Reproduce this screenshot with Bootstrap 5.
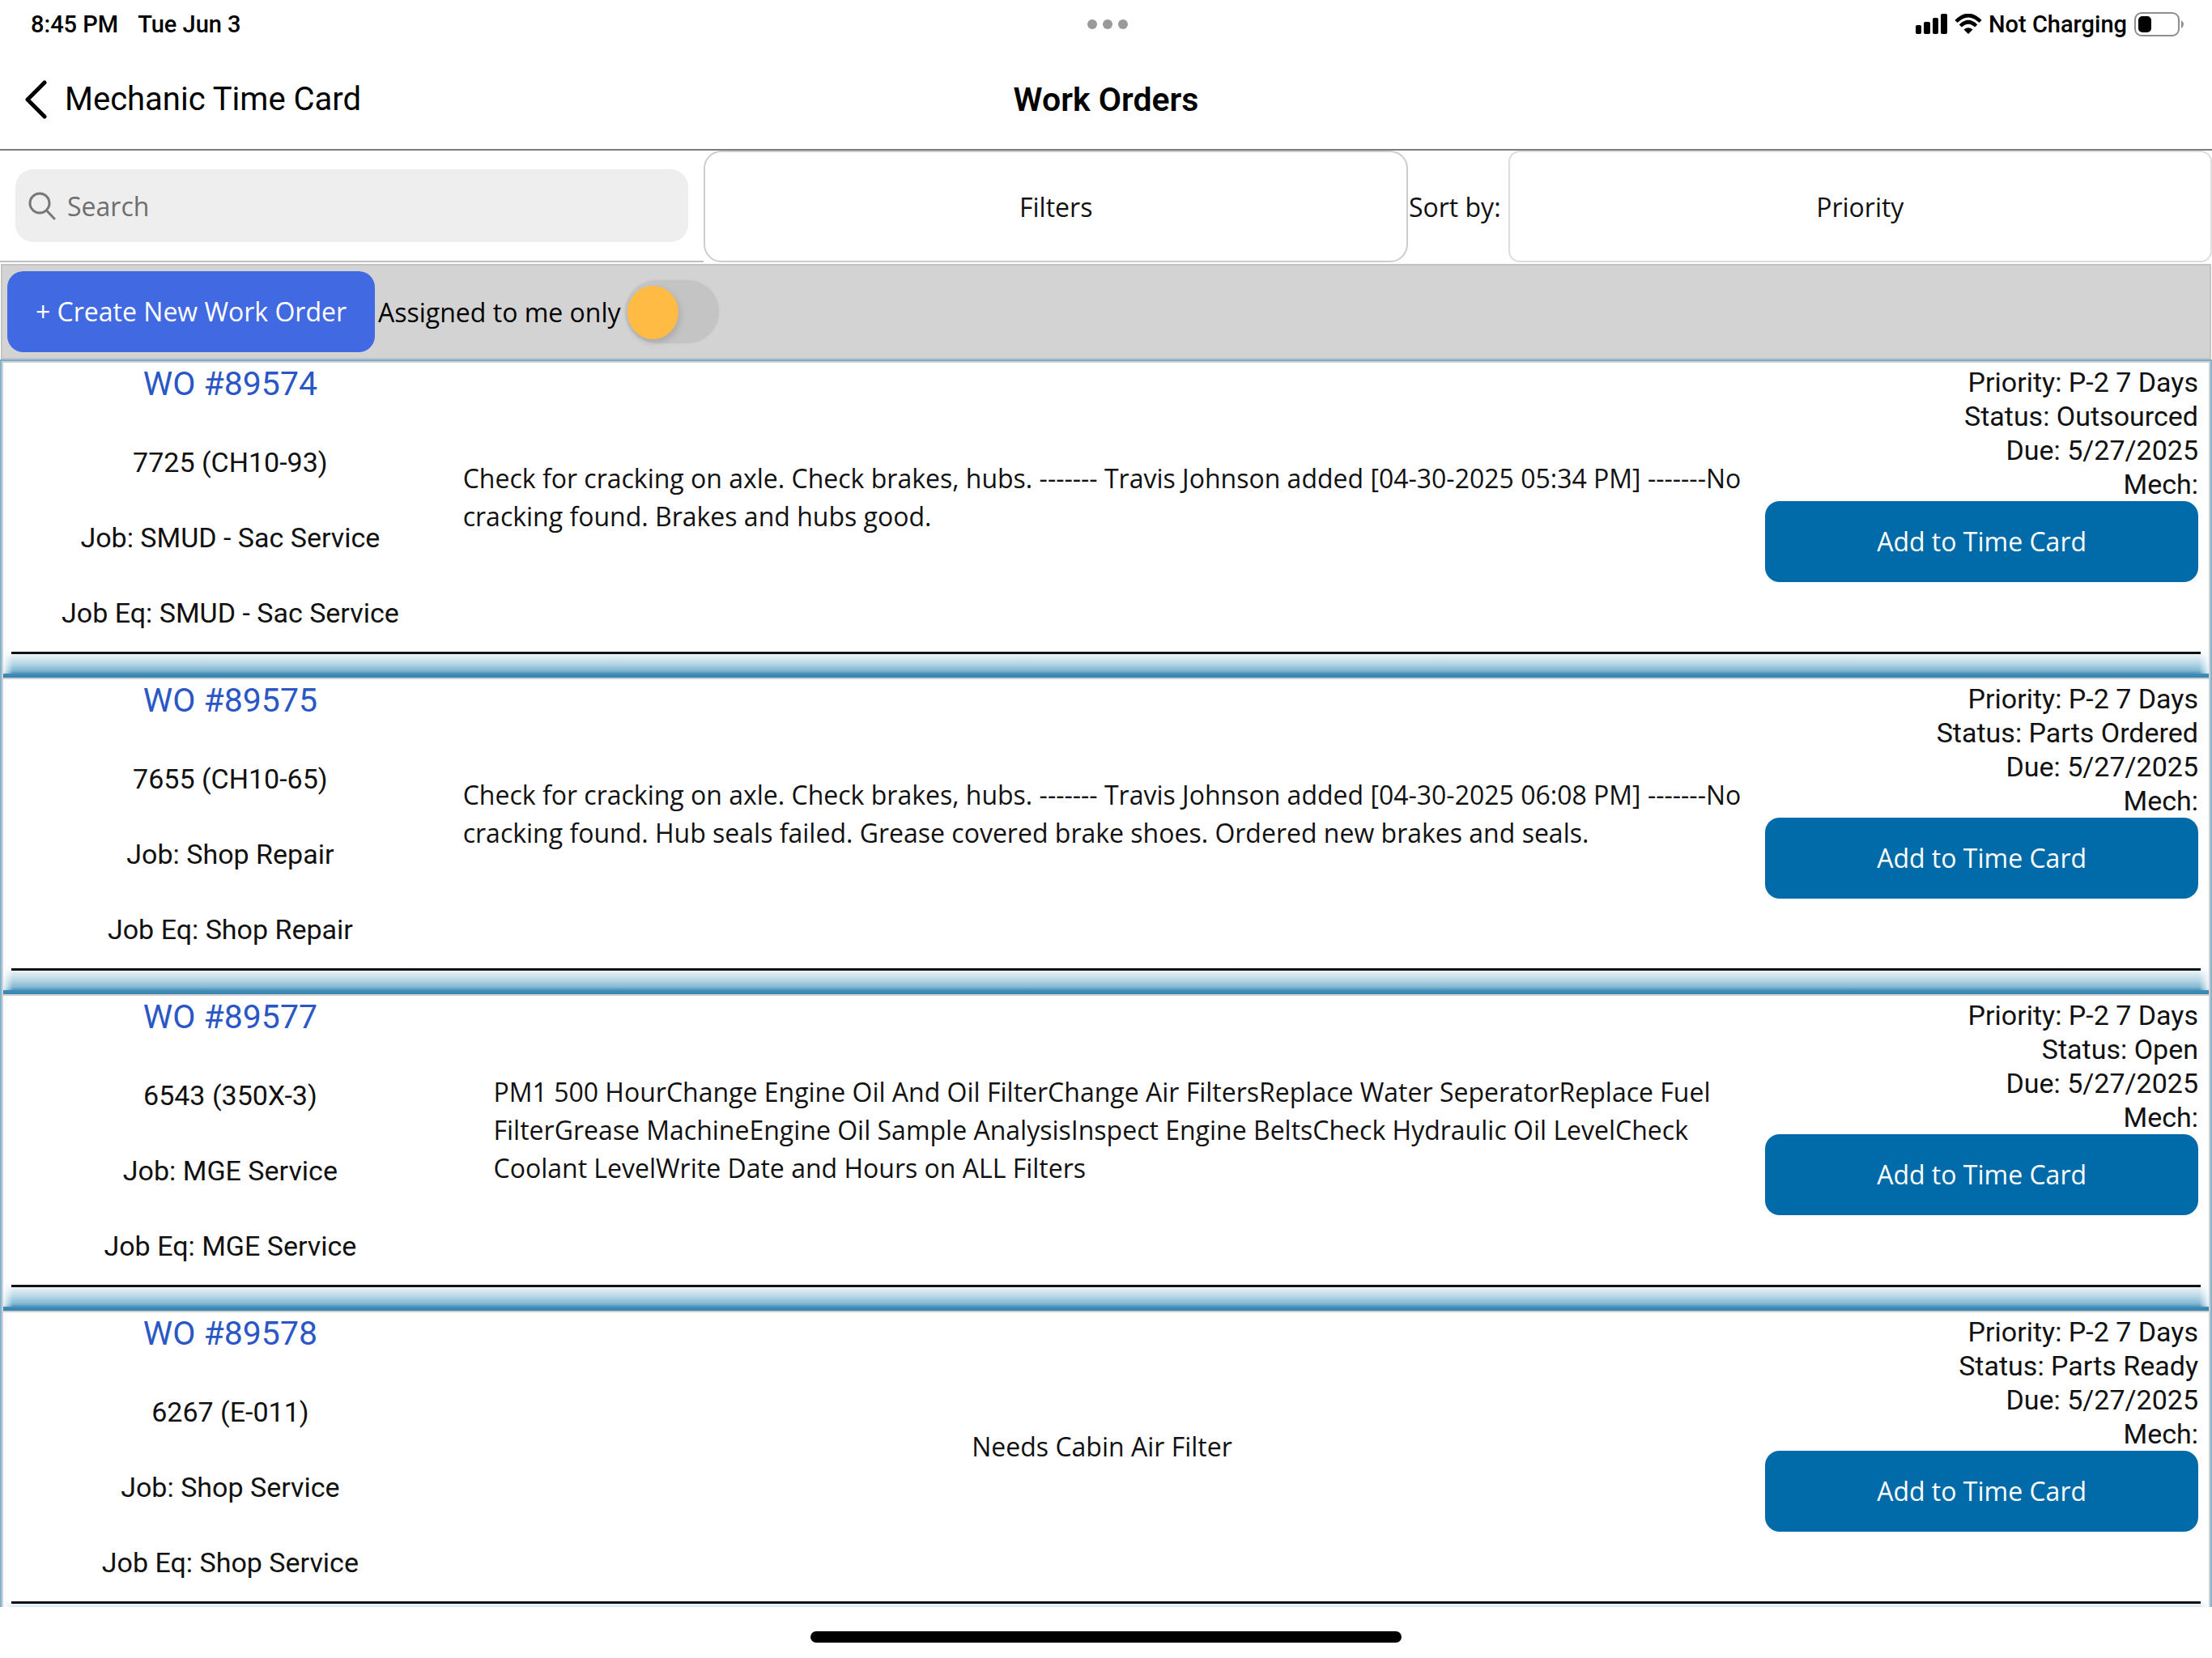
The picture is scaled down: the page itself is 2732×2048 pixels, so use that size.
<!DOCTYPE html>
<html lang="en">
<head>
<meta charset="utf-8">
<meta name="viewport" content="width=device-width, initial-scale=1">
<title>Work Orders</title>
<link rel="stylesheet" href="https://cdn.jsdelivr.net/npm/bootstrap@5.3.0/dist/css/bootstrap.min.css">
<style>
  body { font-family: "Open Sans", sans-serif; font-size: 32px; line-height: 47px; color: #111; background: #fff; }
  .app { height: 100vh; }
  .ui-font { font-family: Roboto, sans-serif; }

  /* system status bar */
  .status-bar { height: 60px; padding: 0 34px 0 38px; font-size: 29px; font-weight: 500; line-height: 36px; color: #000; }
  .status-side { flex: 1 1 0; }
  .dots { gap: 7px; }
  .dots span { width: 12px; height: 12px; border-radius: 50%; background: #999; }

  /* navigation bar */
  .nav-top { height: 126px; padding: 2px 30px 0; border-bottom: 2px solid #7d7d7d; color: #000; font-size: 40px; line-height: 48px; }
  .nav-side { flex: 1 1 0; }
  .nav-back { gap: 22px; }
  .nav-top h1 { font-size: 41px; line-height: 48px; font-weight: 600; }

  /* search and sort row */
  .tools { display: grid; grid-template-columns: minmax(0, 1fr) minmax(0, 1fr) auto minmax(0, 1fr); height: 140px; border-bottom: 2px solid #fff; }
  .search-cell { padding: 0 19px; border-bottom: 2px solid #c0c0c0; }
  .search-field { height: 90px; padding: 0 16px; gap: 14px; border-radius: 22px; background: #eee; }
  .search-field input { outline: 0; }
  .search-field input::placeholder { color: #6e6e6e; opacity: 1; }
  .filter-btn { border: 2px solid #ccc; border-radius: 22px; background: #fff; color: #111; }
  .sort-label { padding: 0 9px 0 1px; }
  .sort-select { border: 2px solid #ddd; border-radius: 14px; background: #fff; color: #111; padding: 0; text-align: center; text-align-last: center; appearance: none; }

  /* action strip */
  .actions { height: 118px; margin: 0 1px; padding: 0 6px; border: 2px solid #c3c3c3; background: #d3d3d3; }
  .create-btn { height: 100px; padding: 0 34px; border-radius: 20px; background: #4169e1; color: #fff; font-size: 32px; }
  .create-btn:hover { background: #3459cf; color: #fff; }
  .actions label { padding: 0 5px 0 4px; color: #000; }
  .toggle-input { appearance: none; width: 116px; height: 78px; padding: 7px 3px; border-radius: 39px; background: #c4c4c4; box-shadow: 0 0 3px #c8c8c8; }
  .toggle-input::before { content: ""; display: block; width: 63px; height: 66px; border-radius: 50%; background: #ffbb44; box-shadow: 2px 4px 8px rgba(0,0,0,.14); }
  .toggle-input:checked::before { margin-left: auto; }

  /* work order list */
  .orders { flex: 1 1 0; overflow: hidden; border-top: 2px solid #72aed0; }
  .order {
    height: 391px; padding: 2px 12px 0; border: 2px solid #7fb4d2; border-width: 0 2px;
    box-shadow: inset 2px 0 #d0d0d0, inset -2px 0 #d0d0d0, inset 0 2px #cfcfcf;
    background:
      linear-gradient(to right, #fff 0, rgba(255,255,255,0) 14px, rgba(255,255,255,0) calc(100% - 14px), #fff 100%) 0 calc(100% - 5px) / 100% 29px no-repeat,
      linear-gradient(to top, #3483b1 0, #3f8bb6 4px, #84b9d3 9px, #b5d5e4 17px, #edf4f8 29px, #fff 34px) 0 100% / 100% 34px no-repeat;
  }
  .order-body { height: 360px; border-bottom: 3px solid #111; }
  .order-main { flex: 0 0 20%; }
  .order-main div, .order-info div { font-size: 34px; }
  .order-main a { font-size: 41px; line-height: 52px; color: #2a57c5; text-decoration: none; }
  .order-text { flex: 1 1 0; min-width: 0; padding: 0 10px 26px 0; }
  .order-text p { white-space: nowrap; }
  .order-info { flex: 0 0 20%; padding: 3px 3px 0; }
  .order-info div { line-height: 42px; }
  .equip { padding-top: 48px; }
  .job-line { padding-top: 46px; }
  .time-btn { height: 100px; border-radius: 18px; background: #006ba8; color: #fff; font-size: 32px; }
  .time-btn:hover { background: #005b90; color: #fff; }

  .home-area { height: 63px; padding-top: 30px; }
  .home-area span { width: 730px; height: 14px; border-radius: 7px; background: #000; }
</style>
</head>
<body>
<div class="app d-flex flex-column">

  <div class="status-bar ui-font d-flex align-items-center">
    <div class="status-side d-flex gap-4"><span>8:45 PM</span><span>Tue Jun 3</span></div>
    <div class="dots d-flex"><span></span><span></span><span></span></div>
    <div class="status-side d-flex align-items-center justify-content-end">
      <svg class="me-2" width="40" height="26" viewBox="0 0 40 26" aria-hidden="true"><rect x="0" y="14" width="7" height="11" rx="2"/><rect x="10" y="10" width="8" height="15" rx="2"/><rect x="21" y="5" width="7" height="20" rx="2"/><rect x="31" y="0" width="8" height="25" rx="2"/></svg>
      <svg class="me-2" width="34" height="26" viewBox="0 0 34 26" aria-hidden="true"><g fill="none" stroke="#000" stroke-width="4.5"><path d="M2 9.500Q17-5.500 32 9.500"/><path d="M7.300 15Q17 5.500 26.700 15"/></g><path d="M11.500 19.500Q17 15 22.500 19.500L17 25Z"/></svg>
      <span>Not Charging</span>
      <svg class="ms-2" width="63" height="30" viewBox="0 0 63 30" aria-hidden="true"><rect x="2" y="1" width="54" height="28" rx="8" fill="#fff" stroke="#8e8e8e" stroke-width="2"/><rect x="6" y="5" width="16" height="20" rx="5"/><path d="M59 10Q65 15 59 20Z" fill="#8e8e8e"/></svg>
    </div>
  </div>

  <header class="nav-top ui-font d-flex align-items-center">
    <div class="nav-side d-flex"><a href="#" class="nav-back d-flex align-items-center text-reset text-decoration-none">
      <svg width="28" height="48" viewBox="0 0 28 48" aria-hidden="true"><path d="M25 3L4 24L25 45" fill="none" stroke="#000" stroke-width="5" stroke-linecap="round" stroke-linejoin="round"/></svg><span>Mechanic Time Card</span></a></div>
    <h1 class="m-0">Work Orders</h1>
    <div class="nav-side"></div>
  </header>

  <div class="tools">
    <div class="search-cell d-flex align-items-center">
      <label class="search-field d-flex align-items-center w-100">
        <svg class="flex-shrink-0" width="34" height="36" viewBox="0 0 34 36" aria-label="Search"><g fill="none" stroke="#777" stroke-width="3" stroke-linecap="round"><circle cx="14" cy="15" r="12"/><path d="M22.500 24L32 34"/></g></svg>
        <input type="search" class="border-0 bg-transparent p-0 flex-grow-1" placeholder="Search">
      </label>
    </div>
    <button type="button" class="filter-btn">Filters</button>
    <label for="sort" class="sort-label align-self-center">Sort by:</label>
    <select id="sort" class="sort-select"><option>Priority</option></select>
  </div>

  <div class="actions d-flex align-items-center">
    <button type="button" class="btn create-btn">+ Create New Work Order</button>
    <label for="mine">Assigned to me only</label>
    <input class="toggle-input" type="checkbox" role="switch" id="mine">
  </div>

  <main class="orders">
    <article class="order"><div class="order-body d-flex">
      <div class="order-main text-center">
        <a href="#" class="ui-font d-block">WO #89574</a>
        <div class="ui-font equip">7725 (CH10-93)</div>
        <div class="ui-font job-line">Job: SMUD - Sac Service</div>
        <div class="ui-font job-line">Job Eq: SMUD - Sac Service</div>
      </div>
      <div class="order-text d-flex align-items-center justify-content-center"><p class="m-0">Check for cracking on axle. Check brakes, hubs. ------- Travis Johnson added [04-30-2025 05:34 PM] -------No<br>cracking found. Brakes and hubs good.</p></div>
      <div class="order-info text-end">
        <div class="ui-font">Priority: P-2 7 Days</div><div class="ui-font">Status: Outsourced</div><div class="ui-font">Due: 5/27/2025</div><div class="ui-font">Mech:</div>
        <button type="button" class="btn time-btn w-100">Add to Time Card</button>
      </div>
    </div></article>

    <article class="order"><div class="order-body d-flex">
      <div class="order-main text-center">
        <a href="#" class="ui-font d-block">WO #89575</a>
        <div class="ui-font equip">7655 (CH10-65)</div>
        <div class="ui-font job-line">Job: Shop Repair</div>
        <div class="ui-font job-line">Job Eq: Shop Repair</div>
      </div>
      <div class="order-text d-flex align-items-center justify-content-center"><p class="m-0">Check for cracking on axle. Check brakes, hubs. ------- Travis Johnson added [04-30-2025 06:08 PM] -------No<br>cracking found. Hub seals failed. Grease covered brake shoes. Ordered new brakes and seals.</p></div>
      <div class="order-info text-end">
        <div class="ui-font">Priority: P-2 7 Days</div><div class="ui-font">Status: Parts Ordered</div><div class="ui-font">Due: 5/27/2025</div><div class="ui-font">Mech:</div>
        <button type="button" class="btn time-btn w-100">Add to Time Card</button>
      </div>
    </div></article>

    <article class="order"><div class="order-body d-flex">
      <div class="order-main text-center">
        <a href="#" class="ui-font d-block">WO #89577</a>
        <div class="ui-font equip">6543 (350X-3)</div>
        <div class="ui-font job-line">Job: MGE Service</div>
        <div class="ui-font job-line">Job Eq: MGE Service</div>
      </div>
      <div class="order-text d-flex align-items-center justify-content-center"><p class="m-0">PM1 500 HourChange Engine Oil And Oil FilterChange Air FiltersReplace Water SeperatorReplace Fuel<br>FilterGrease MachineEngine Oil Sample AnalysisInspect Engine BeltsCheck Hydraulic Oil LevelCheck<br>Coolant LevelWrite Date and Hours on ALL Filters</p></div>
      <div class="order-info text-end">
        <div class="ui-font">Priority: P-2 7 Days</div><div class="ui-font">Status: Open</div><div class="ui-font">Due: 5/27/2025</div><div class="ui-font">Mech:</div>
        <button type="button" class="btn time-btn w-100">Add to Time Card</button>
      </div>
    </div></article>

    <article class="order"><div class="order-body d-flex">
      <div class="order-main text-center">
        <a href="#" class="ui-font d-block">WO #89578</a>
        <div class="ui-font equip">6267 (E-011)</div>
        <div class="ui-font job-line">Job: Shop Service</div>
        <div class="ui-font job-line">Job Eq: Shop Service</div>
      </div>
      <div class="order-text d-flex align-items-center justify-content-center"><p class="m-0">Needs Cabin Air Filter</p></div>
      <div class="order-info text-end">
        <div class="ui-font">Priority: P-2 7 Days</div><div class="ui-font">Status: Parts Ready</div><div class="ui-font">Due: 5/27/2025</div><div class="ui-font">Mech:</div>
        <button type="button" class="btn time-btn w-100">Add to Time Card</button>
      </div>
    </div></article>
  </main>

  <footer class="home-area d-flex justify-content-center"><span></span></footer>
</div>
<script src="https://cdn.jsdelivr.net/npm/bootstrap@5.3.0/dist/js/bootstrap.bundle.min.js"></script>
</body>
</html>
